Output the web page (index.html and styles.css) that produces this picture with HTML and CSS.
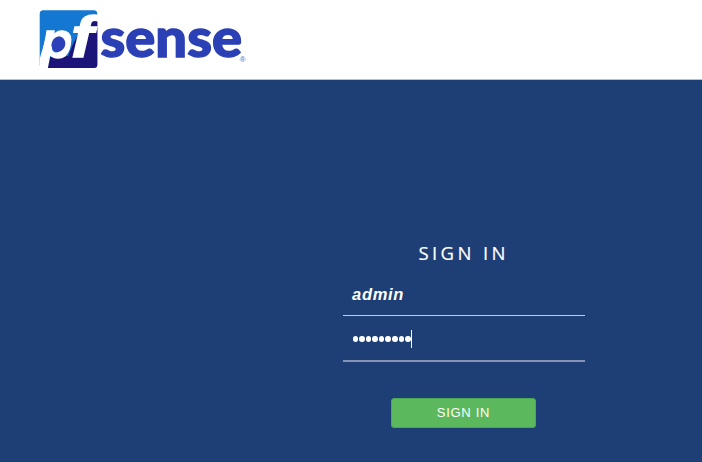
FILE: index.html
```html
<!DOCTYPE html>
<html lang="en">
<head>
<meta charset="utf-8">
<title>pfSense - Login</title>
<link rel="stylesheet" href="styles.css">
</head>
<body>
<header class="header">
  <svg class="logo" width="210" height="64" viewBox="38 8 210 64" role="img" aria-label="pfsense">
    <defs><clipPath id="tile"><rect x="39.7" y="10.3" width="57.6" height="57.7" rx="3.5"/></clipPath></defs>
    <g clip-path="url(#tile)">
      <rect x="39" y="10" width="59" height="59" fill="#1477d2"/>
      <path d="M44 69L50 57L68 56L73 44L84 24L98 18V69Z" fill="#1c1479"/>
      <path d="M39 61L47 34L56 34L45.2 69H39Z" fill="#fff"/>
    </g>
    <text class="mark" x="41.3" y="57.6" textLength="31" lengthAdjust="spacingAndGlyphs">p</text>
    <ellipse cx="58.4" cy="44.2" rx="6.8" ry="7.8" transform="rotate(22 58.4 44.2)" fill="#2d40b9"/>
    <text class="mark mark-f" x="71" y="57.4" textLength="22.5" lengthAdjust="spacingAndGlyphs">f</text>
    <text class="word" x="100.5" y="57.4" textLength="141.5" lengthAdjust="spacingAndGlyphs">sense</text>
    <text class="reg" x="239.8" y="61.8">®</text>
  </svg>
</header>
<main class="page">
  <form class="login">
    <h1 class="title">SIGN IN</h1>
    <div class="field username">admin</div>
    <div class="field password"><span class="dots"><i></i><i></i><i></i><i></i><i></i><i></i><i></i><i></i><i></i></span><span class="caret"></span></div>
    <button class="submit" type="button">SIGN IN</button>
  </form>
</main>
</body>
</html>
```
FILE: styles.css
```css
* { box-sizing: border-box; }
body { margin: 0; height: 462px; overflow: hidden; background: #1e3f75; color: #fff; font-family: "Liberation Sans", Arial, sans-serif; }
.header { height: 80px; padding: 8px 0 0 38px; background: #fff; border-bottom: 1px solid #b4bfce; }
.logo { display: block; }
.mark { font: italic 700 50px "Liberation Sans", sans-serif; fill: #fff; stroke: #fff; stroke-width: 1.5px; }
.mark-f { font-size: 58px; }
.word { font: 900 54px Lato, sans-serif; fill: #2b40b5; stroke: #2b40b5; stroke-width: 1.4px; }
.reg { font: 8px "Liberation Sans", sans-serif; fill: #5264c4; }
.login { display: flex; flex-direction: column; width: 242px; margin: 159px 0 0 343px; }
.title { margin: 0 0 0 75.5px; height: 30px; font: 400 18.5px/27px "Open Sans", sans-serif; letter-spacing: 3.4px; white-space: nowrap; -webkit-text-stroke: .2px #fff; }
.field { display: flex; align-items: center; padding-left: 9px; border-bottom: 1px solid #c0cada; }
.username { height: 47px; padding-top: 4px; font: italic 700 16.5px/20px "Liberation Sans", sans-serif; letter-spacing: .7px; }
.password { height: 46px; border-bottom: 2px solid #8495b3; padding-top: 1px; }
.dots { display: flex; gap: 1.1px; padding-left: .5px; }
.dots i { width: 5.5px; height: 6px; border-radius: 50%; background: #fff; }
.caret { width: 1px; height: 18px; background: #fff; }
.submit { width: 145px; height: 30px; margin: 36px 0 0 48px; padding: 0 0 2px; border: 1px solid #4ca654; border-radius: 3px; background: #5cb85c; color: #fff; font: 13px "Liberation Sans", sans-serif; letter-spacing: .7px; }
```
